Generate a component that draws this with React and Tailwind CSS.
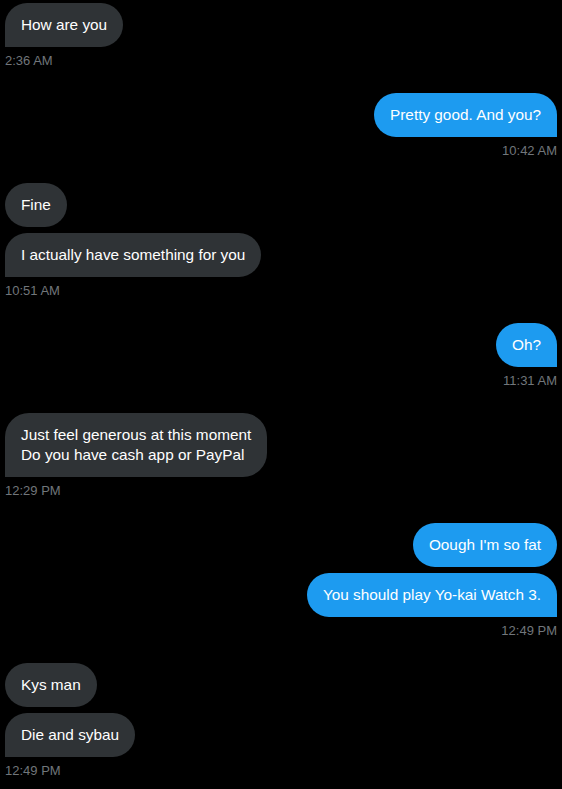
const groups = [
  { side: "left", msgs: ["How are you"], time: "2:36 AM" },
  { side: "right", msgs: ["Pretty good. And you?"], time: "10:42 AM" },
  { side: "left", msgs: ["Fine", "I actually have something for you"], time: "10:51 AM" },
  { side: "right", msgs: ["Oh?"], time: "11:31 AM" },
  {
    side: "left",
    msgs: [["Just feel generous at this moment", "Do you have cash app or PayPal"]],
    time: "12:29 PM",
  },
  { side: "right", msgs: ["Oough I'm so fat", "You should play Yo-kai Watch 3."], time: "12:49 PM" },
  { side: "left", msgs: ["Kys man", "Die and sybau"], time: "12:49 PM" },
];

function Bubble({ side, text, last }) {
  const lines = Array.isArray(text) ? text : [text];
  const base = "px-4 py-3 text-[15.35px] leading-5 rounded-3xl text-white";
  const look =
    side === "left"
      ? "bg-[#2f3336] " + (last ? "rounded-bl-none" : "")
      : "bg-[#1d9bf0] " + (last ? "rounded-br-none" : "");
  return (
    <div className={base + " " + look}>
      {lines.map((l, i) => (
        <div key={i}>{l}</div>
      ))}
    </div>
  );
}

function Group({ side, msgs, time }) {
  return (
    <div className={"flex flex-col gap-[6px] " + (side === "left" ? "items-start" : "items-end")}>
      {msgs.map((m, i) => (
        <Bubble key={i} side={side} text={m} last={i === msgs.length - 1} />
      ))}
      <div className="text-[13px] leading-4 text-[#71767b]">{time}</div>
    </div>
  );
}

export default function App() {
  return (
    <div
      className="min-h-screen w-[562px] bg-black px-[5px] pt-[3px] flex flex-col gap-[24px]"
      style={{ fontFamily: '"Liberation Sans", Arial, sans-serif' }}
    >
      {groups.map((g, i) => (
        <Group key={i} {...g} />
      ))}
    </div>
  );
}
